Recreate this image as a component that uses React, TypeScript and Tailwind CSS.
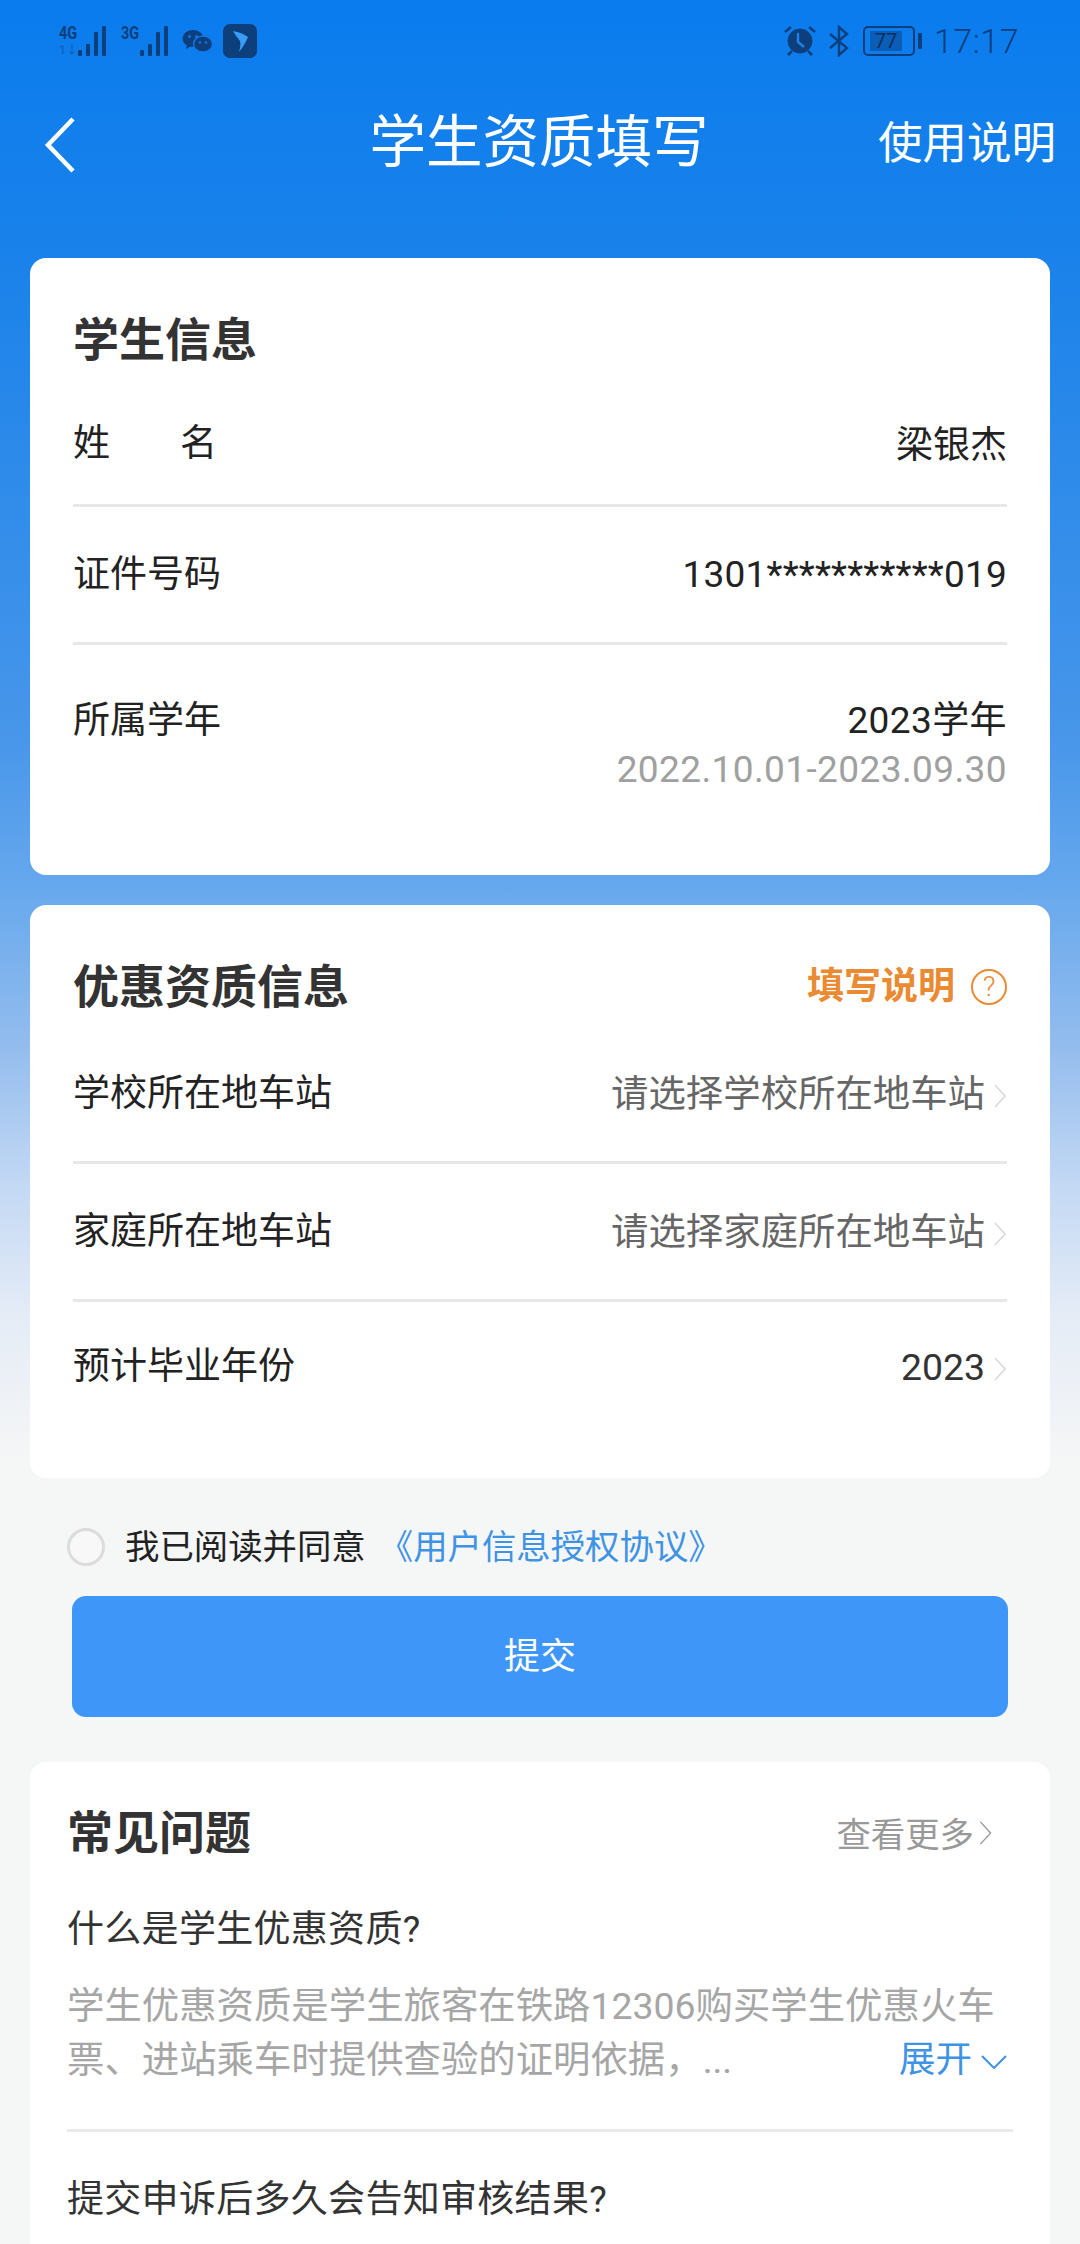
import React from "react";

const FONT = "font-['Roboto','Noto_Sans_CJK_SC',sans-serif]";

function Signal({ label, data }: { label: string; data?: boolean }) {
  return (
    <div className="relative h-[30px] w-[50px] text-[#0d3f7c]">
      <span className="absolute left-0 -top-[1px] text-[18px] leading-[16px] font-bold scale-x-[0.8] origin-left">{label}</span>
      {data && (
        <span className="absolute left-0 top-[19px] text-[12px] leading-[11px] font-bold text-[#0d3f7c]/40">1↓</span>
      )}
      <svg className="absolute left-0 top-0" width="50" height="30" viewBox="0 0 50 30" fill="currentColor">
        <rect x="19" y="24" width="4" height="6" rx="1" />
        <rect x="27" y="18" width="4" height="12" rx="1" />
        <rect x="35" y="6" width="4" height="24" rx="1" />
        <rect x="43" y="0" width="4" height="30" rx="1" />
      </svg>
    </div>
  );
}

function WeChat() {
  return (
    <svg width="31" height="22" viewBox="0 0 31 22" fill="#0d3f7c">
      <ellipse cx="11" cy="8.5" rx="10.5" ry="8.5" />
      <path d="M5 14l-1 5 5-3z" />
      <ellipse cx="21" cy="14" rx="9.5" ry="8" stroke="#1076e8" strokeWidth="1.4" />
      <circle cx="7.5" cy="6.5" r="1.5" fill="#1076e8" />
      <circle cx="14.5" cy="6.5" r="1.5" fill="#1076e8" />
      <circle cx="18" cy="12.5" r="1.2" fill="#1076e8" />
      <circle cx="24" cy="12.5" r="1.2" fill="#1076e8" />
    </svg>
  );
}

function AppBadge() {
  return (
    <svg width="34" height="34" viewBox="0 0 34 34">
      <rect width="34" height="34" rx="7" fill="#0d3f7c" />
      <path d="M10 7c6 1 11 3 15 6-2 5-5 10-9 15 1-4 2-7 1-11-2-3-5-6-7-10z" fill="#3a9cf5" />
    </svg>
  );
}

function Alarm() {
  return (
    <svg width="32" height="31" viewBox="0 0 32 31" fill="none" stroke="#0d3f7c">
      <circle cx="16" cy="16" r="12" fill="#0d3f7c" strokeWidth="1" />
      <path d="M14 8v9l6 5" stroke="#1a82ea" strokeWidth="2.4" />
      <path d="M1 7l6-5M31 7l-6-5M4 30l4-4M28 30l-4-4" strokeWidth="2.6" />
    </svg>
  );
}

function Bluetooth() {
  return (
    <svg width="22" height="32" viewBox="0 0 22 32" fill="none" stroke="#0d3f7c" strokeWidth="2.4">
      <path d="M2 9l17 14-8 7V2l8 7L2 23" />
    </svg>
  );
}

function Battery() {
  return (
    <div className="flex items-center gap-[3px]">
      <div className="w-[52px] h-[30px] rounded-[5px] border-[2px] border-[#0d3f7c] py-[3px] pl-[5px] flex">
        <div className="w-[32px] bg-[#0b5db5] flex items-center justify-center text-[20px] leading-none text-[#0a2f60] font-normal">77</div>
      </div>
      <div className="w-[4px] h-[16px] bg-[#0d3f7c] rounded-[1px]" />
    </div>
  );
}

function Chevron({ className }: { className: string }) {
  return (
    <svg className={className} viewBox="0 0 14 28" fill="none" stroke="currentColor" strokeWidth="1.6">
      <path d="M1 1l12 13L1 27" />
    </svg>
  );
}

function SelectRow({ label, value, muted, className }: { label: string; value: string; muted?: boolean; className: string }) {
  return (
    <div className={`flex items-center justify-between text-[#222] ${className}`}>
      <span className="text-[37px] leading-[50px]">{label}</span>
      <div className="flex items-center">
        <span className={muted ? "text-[37.4px] leading-[50px] text-[#666]" : "text-[37.4px] leading-[50px] text-[#333]"}>{value}</span>
        <Chevron className="ml-[8px] w-[14px] h-[24px] text-[#d4d4d4] mt-[4px]" />
      </div>
    </div>
  );
}

export default function App() {
  return (
    <div className={`h-[2244px] w-[1080px] overflow-hidden bg-[linear-gradient(180deg,#0a7cee_0px,#1a82ea_260px,#4796ea_736px,#66a8ed_887px,#94bdee_1048px,#c2d8f4_1182px,#e5ecf6_1316px,#f5f6f6_1460px)] ${FONT}`}>
      <div className="flex items-center justify-between h-[81px] pl-[59px] pr-[61px]">
        <div className="flex items-center">
          <Signal label="4G" data />
          <div className="w-[12px]" />
          <Signal label="3G" />
          <div className="w-[11px]" />
          <WeChat />
          <div className="w-[10px]" />
          <AppBadge />
        </div>
        <div className="flex items-center">
          <Alarm />
          <div className="w-[12px]" />
          <Bluetooth />
          <div className="w-[13px]" />
          <Battery />
          <span className="ml-[12px] text-[34px] leading-none text-[#0d3f7c] font-light tracking-[0.5px]">17:17</span>
        </div>
      </div>

      <div className="relative flex items-center justify-center h-[123px]">
        <svg className="absolute left-[44px] top-[36px]" width="32" height="56" viewBox="0 0 32 56" fill="none" stroke="#fff" strokeWidth="4.5">
          <path d="M29 2L4 28l25 26" />
        </svg>
        <h1 className="text-[56.5px] leading-[70px] text-white -ml-[2px]">学生资质填写</h1>
        <span className="absolute right-[24px] top-[33px] text-[44.5px] leading-[60px] text-white">使用说明</span>
      </div>

      <div className="px-[30px] pt-[54px]">
        <div className="h-[617px] rounded-[16px] bg-white px-[43px] pt-[53px]">
          <h2 className="text-[46px] leading-[58px] font-bold text-[#333]">学生信息</h2>
          <div className="flex items-start justify-between h-[138px] pt-[50px] border-b-[3px] border-[#e8e8e8] text-[37px] leading-[50px] text-[#222]">
            <span>姓<span className="ml-[70px]">名</span></span>
            <span className="mt-[2px]">梁银杰</span>
          </div>
          <div className="flex items-center justify-between h-[138px] border-b-[3px] border-[#e8e8e8] text-[37px] leading-[50px] text-[#222]">
            <span>证件号码</span>
            <span className="tracking-[0.2px]">1301***********019</span>
          </div>
          <div className="flex justify-between pt-[51px] text-[37px] leading-[50px] text-[#222]">
            <span>所属学年</span>
            <div className="text-right tracking-[0.4px]">
              <div>2023学年</div>
              <div className="-mt-[1px] text-[#a0a0a0]">2022.10.01-2023.09.30</div>
            </div>
          </div>
        </div>

        <div className="mt-[30px] h-[573px] rounded-[16px] bg-white px-[43px] pt-[53px]">
          <div className="flex items-center justify-between">
            <h2 className="text-[46px] leading-[58px] font-bold text-[#333]">优惠资质信息</h2>
            <div className="flex items-center gap-[16px]">
              <span className="text-[37px] leading-[50px] font-bold text-[#ea8a33]">填写说明</span>
              <span className="w-[36px] h-[36px] rounded-full border-[2px] border-[#ea8a33] flex items-center justify-center text-[28px] leading-none font-light text-[#ea8a33]">?</span>
            </div>
          </div>
          <SelectRow label="学校所在地车站" value="请选择学校所在地车站" muted className="h-[148px] pt-[10px] border-b-[3px] border-[#e8e8e8]" />
          <SelectRow label="家庭所在地车站" value="请选择家庭所在地车站" muted className="h-[138px] border-b-[3px] border-[#e8e8e8]" />
          <SelectRow label="预计毕业年份" value="2023" className="h-[130px]" />
        </div>

        <div className="flex items-center mt-[44px] h-[50px] pl-[37px] leading-[50px]">
          <span className="w-[38px] h-[38px] rounded-full border-[3px] border-[#dcdcdc] bg-[#f8f8f8]" />
          <span className="ml-[20px] text-[34.4px] text-[#222]">我已阅读并同意</span>
          <span className="ml-[13px] text-[34.4px] text-[#3f93e4]">《用户信息授权协议》</span>
        </div>

        <div className="mx-[42px] mt-[24px] h-[121px] rounded-[14px] bg-[#3e97f8] flex items-center justify-center text-[36px] text-white">提交</div>

        <div className="mt-[45px] h-[500px] rounded-t-[16px] bg-white px-[37px] pt-[41px]">
          <div className="flex items-center justify-between">
            <h2 className="text-[46px] leading-[60px] font-bold text-[#333]">常见问题</h2>
            <div className="flex items-center mt-[5px] text-[34.4px] text-[#999] mr-[21px]">
              查看更多
              <Chevron className="ml-[5px] -mt-[4px] w-[13px] h-[24px] text-[#999]" />
            </div>
          </div>
          <div className="mt-[42px] text-[37px] leading-[50px] text-[#333] tracking-[0.3px]">什么是学生优惠资质?</div>
          <div className="relative mt-[24px] pb-[42px] border-b-[3px] border-[#eaeaea] text-[37.4px] leading-[54px] text-[#a6a6a6]">
            <p>学生优惠资质是学生旅客在铁路12306购买学生优惠火车</p>
            <p>票、进站乘车时提供查验的证明依据，...</p>
            <div className="absolute right-[6px] top-[54px] flex items-center text-[36.5px] text-[#3f93e4]">
              展开
              <svg className="ml-[9px] mt-[4px]" width="26" height="14" viewBox="0 0 26 14" fill="none" stroke="currentColor" strokeWidth="2">
                <path d="M1 1l12 12L25 1" />
              </svg>
            </div>
          </div>
          <div className="mt-[43px] text-[37px] leading-[50px] text-[#333] tracking-[0.3px]">提交申诉后多久会告知审核结果?</div>
        </div>
      </div>
    </div>
  );
}
